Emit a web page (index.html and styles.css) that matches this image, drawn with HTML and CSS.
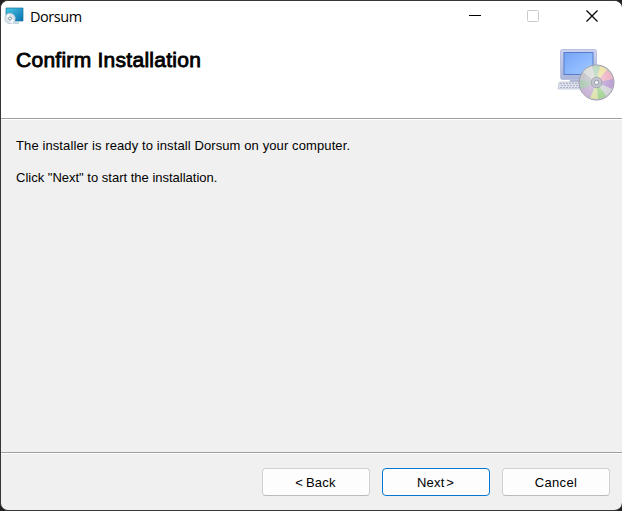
FILE: index.html
```html
<!DOCTYPE html>
<html lang="en">
<head>
<meta charset="utf-8">
<title>Dorsum</title>
<link rel="stylesheet" href="styles.css">
</head>
<body>
<main class="window">
  <header class="titlebar">
    <svg class="app-icon" width="20" height="18" viewBox="0 0 20 18">
      <defs><linearGradient id="screen" x2="1" y2="1"><stop stop-color="#48c6e4"/><stop offset="1" stop-color="#0870b0"/></linearGradient></defs>
      <path d="M2 1h17v13H2z" fill="url(#screen)" stroke="#17729f" stroke-width=".7"/>
      <path d="M9 16h6" stroke="#8bb2c5"/>
      <circle cx="6" cy="11.5" r="5.2" fill="#dce5eb" stroke="#b3c1c9" stroke-width=".7"/>
      <path d="M6 11.5L2 9A5 5 0 0 1 5 6.5zM6 11.5l4.5 2A5 5 0 0 1 7 16.5z" fill="#f7fafc"/>
      <circle cx="6" cy="11.5" r="1.5" fill="#fff" stroke="#70929f" stroke-width=".9"/>
    </svg>
    <span class="title">Dorsum</span>
    <svg class="controls" width="124" height="14" viewBox="0 0 124 14">
      <path d="M0 5.5h12" stroke="#000"/>
      <rect x="58.5" y=".5" width="11" height="11" rx="1" fill="none" stroke="#ccc"/>
      <path d="M117.5 .5l11 11m0-11l-11 11" stroke="#000" stroke-width="1.2"/>
    </svg>
  </header>
  <section class="banner">
    <h1>Confirm Installation</h1>
    <svg class="setup-icon" width="60" height="56" viewBox="0 0 60 56">
      <defs>
        <linearGradient id="blue" x2="1" y2="1"><stop stop-color="#76a3f4"/><stop offset=".55" stop-color="#8db9ff"/><stop offset="1" stop-color="#a5caff"/></linearGradient>
        <linearGradient id="frame" x2="0" y2="1"><stop stop-color="#ccd2ee"/><stop offset="1" stop-color="#abb5d8"/></linearGradient>
        <radialGradient id="shine"><stop stop-color="#fff" stop-opacity=".35"/><stop offset="1" stop-color="#fff" stop-opacity="0"/></radialGradient>
      </defs>
      <path d="M13 31h18v8H12z" fill="#b0b8d4"/>
      <rect x="3.5" y="1.5" width="36" height="30" rx="2" fill="url(#frame)" stroke="#b9c0e2"/>
      <rect x="7" y="4.5" width="29" height="22" fill="url(#blue)" stroke="#557cce"/>
      <path d="M3 34h29v7H1l1-6z" fill="#e0e3ef" stroke="#b5bbcf" stroke-width=".7"/>
      <path d="M3 35.5h26M4 37.5h25M3 39.5h26" stroke="#a0a7bb" stroke-width=".8" stroke-dasharray="2 1"/>
      <circle cx="39.5" cy="34.5" r="17.5" fill="#c3c5cb" stroke="#9c9caa"/>
      <path d="M39.5 34.5L26 24A17 17 0 0 1 35 18z" fill="#dcdedc"/>
      <path d="M39.5 34.5L35 18a17 17 0 0 1 8 0z" fill="#bddac1"/>
      <path d="M39.5 34.5L43 18a17 17 0 0 1 7 4z" fill="#eee4aa"/>
      <path d="M39.5 34.5L50 22a17 17 0 0 1 6 9z" fill="#edb4c5"/>
      <path d="M39.5 34.5L56 31a17 17 0 0 1-1 10z" fill="#bb9fd4"/>
      <path d="M39.5 34.5L55 41a17 17 0 0 1-6 7z" fill="#d2d4d8"/>
      <path d="M39.5 34.5L49 48a17 17 0 0 1-8 3z" fill="#a3d493"/>
      <path d="M39.5 34.5L41 51a17 17 0 0 1-8-1z" fill="#dbe2a9"/>
      <path d="M39.5 34.5L33 50a17 17 0 0 1-9-9z" fill="#c7b2d4"/>
      <path d="M39.5 34.5L24 41a17 17 0 0 1-1-9z" fill="#afc9b6"/>
      <circle cx="39.5" cy="34.5" r="16.5" fill="url(#shine)"/>
      <circle cx="39.5" cy="34.5" r="5.3" fill="#c2c5ce" stroke="#a2a6b0"/>
      <circle cx="39.5" cy="34.5" r="2.2" fill="#f2f4fa" stroke="#9398a5"/>
    </svg>
  </section>
  <section class="content">
    <p class="ready">The installer is ready to install Dorsum on your computer.</p>
    <p class="start">Click "Next" to start the installation.</p>
  </section>
  <footer class="actions">
    <button class="back">&lt; Back</button>
    <button class="next">Next &gt;</button>
    <button class="cancel">Cancel</button>
  </footer>
</main>
</body>
</html>
```
FILE: styles.css
```css
* { box-sizing: border-box; }
body {
  margin: 0;
  background: #202020;
  font-family: "Liberation Sans", sans-serif;
  color: #000;
}
.window {
  height: 511px;
  display: flex;
  flex-direction: column;
  border: 1px solid #363636;
  border-right: 0;
  border-radius: 8px;
  overflow: hidden;
  background: #f0f0f0;
}
.titlebar {
  height: 32px;
  flex: none;
  display: flex;
  align-items: center;
  padding-left: 3px;
  background: #fff;
}
.app-icon { margin-top: -2px; }
.title {
  margin-left: 6px;
  font: 14.5px/20px "Open Sans", sans-serif;
  letter-spacing: -.45px;
}
.controls {
  margin-left: auto;
  margin-right: 29px;
  overflow: visible;
}
.banner {
  height: 86px;
  flex: none;
  display: flex;
  justify-content: space-between;
  align-items: flex-start;
  padding: 15px 5px 0 15px;
  border-bottom: 1px solid #a0a0a0;
  background: #fff;
}
h1 {
  margin: 0;
  font-size: 21px;
  font-weight: 400;
  line-height: 24px;
  letter-spacing: .27px;
  -webkit-text-stroke: .85px #000;
}
.content {
  flex: 1;
  padding: 18px 15px;
  border-top: 1px solid #fff;
}
p {
  margin: 0 0 16px;
  font-size: 13px;
  line-height: 16px;
  white-space: nowrap;
}
.ready { letter-spacing: .105px; }
.actions {
  height: 58px;
  flex: none;
  display: flex;
  justify-content: flex-end;
  gap: 12px;
  padding: 15px 12px 0 0;
  border-top: 1px solid #a0a0a0;
  box-shadow: inset 0 1px #fff;
}
button {
  width: 108px;
  height: 28px;
  padding: 1px 0 0;
  border: 1px solid #d0d0d0;
  border-bottom-color: #bbb;
  border-radius: 4px;
  background: #fdfdfd;
  color: #000;
  font: 13px/16px "Liberation Sans", sans-serif;
}
.back {
  padding-right: 1px;
  letter-spacing: .25px;
  word-spacing: -1px;
}
.next {
  border-color: #0078d4;
  padding-right: 1px;
  word-spacing: -2px;
  letter-spacing: .15px;
}
.cancel { letter-spacing: .3px; }
```
